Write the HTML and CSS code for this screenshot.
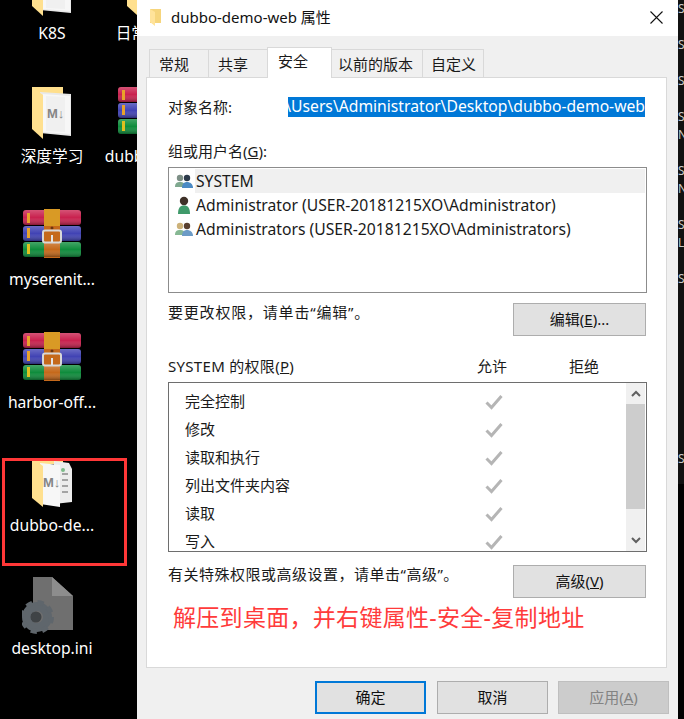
FILE: index.html
```html
<!DOCTYPE html>
<html>
<head>
    <title>dubbo-demo-web 属性</title>
    <link rel="stylesheet" href="styles.css">
</head>
<body>
    <svg class="defs" width="0" height="0">
        <defs>
            <linearGradient id="shade" x1="0" y1="0" x2="0" y2="1">
                <stop offset="0" stop-color="#fff" stop-opacity=".22"/>
                <stop offset=".5" stop-color="#fff" stop-opacity="0"/>
                <stop offset="1" stop-color="#000" stop-opacity=".35"/>
            </linearGradient>
            <symbol id="rar" viewBox="0 0 58 49">
                <rect x="0" y="1" width="58" height="15" rx="3" fill="#c9224f"/>
                <rect x="0" y="17" width="58" height="15" rx="3" fill="#4143b4"/>
                <rect x="0" y="33" width="58" height="15" rx="3" fill="#0f8c3c"/>
                <rect x="0" y="1" width="58" height="15" rx="3" fill="url(#shade)"/>
                <rect x="0" y="17" width="58" height="15" rx="3" fill="url(#shade)"/>
                <rect x="0" y="33" width="58" height="15" rx="3" fill="url(#shade)"/>
                <rect x="4" y="4" width="3" height="10" fill="#e8a32a"/>
                <rect x="4" y="19" width="3" height="10" fill="#e8a32a"/>
                <rect x="4" y="35" width="3" height="10" fill="#e0c020"/>
                <rect x="21" y="0" width="16" height="17" fill="#d99a25"/>
                <rect x="21" y="17" width="16" height="32" fill="#c5691b"/>
                <rect x="21" y="33" width="16" height="15" fill="url(#shade)"/>
                <circle cx="29" cy="19" r="1.500" fill="#6b3510"/>
                <rect x="20" y="21.500" width="18" height="12" rx="2" fill="none" stroke="#d8d8d8" stroke-width="2"/>
                <rect x="28" y="26" width="2" height="7" fill="#e4e4e4"/>
            </symbol>
            <symbol id="md-folder" viewBox="0 0 40 52">
                <path d="M0 0H31V8H0Z" fill="#ffdf8c"/>
                <path d="M8 5L39 7V49L8 46Z" fill="#e9e9e9"/>
                <path d="M11 7L38 9V47L11 45Z" fill="#f7f7f7"/>
                <path d="M14 9L33 10V45L14 44Z" fill="#f0f0f0"/>
                <text x="15" y="31" class="md-mark">M↓</text>
                <path d="M0 0L11 8V52L0 42Z" fill="#ffe08f"/>
            </symbol>
            <symbol id="group-grey" viewBox="0 0 18 14">
                <circle cx="5" cy="4" r="3.200" fill="#7d8f86"/>
                <path d="M0 13C0 9 2 8 5 8S10 9 10 13Z" fill="#7fa88f"/>
                <circle cx="12" cy="4" r="3.200" fill="#2c3a4a"/>
                <path d="M7 14C7 10 9 8 12 8S18 10 18 14Z" fill="#4b8ac4"/>
            </symbol>
            <symbol id="group-tan" viewBox="0 0 18 14">
                <circle cx="5" cy="4" r="3.200" fill="#cdb27a"/>
                <path d="M0 13C0 9 2 8 5 8S10 9 10 13Z" fill="#86b893"/>
                <circle cx="12" cy="4" r="3.200" fill="#5a4030"/>
                <path d="M7 14C7 10 9 8 12 8S18 10 18 14Z" fill="#6c9bc6"/>
            </symbol>
            <symbol id="check" viewBox="0 0 18 16">
                <path d="M1.500 8.500L6.500 13.500L16.500 2" fill="none" stroke="#b5b5b5" stroke-width="3"/>
            </symbol>
        </defs>
    </svg>

    <div class="desktop">
        <div class="icon-col">
            <div class="desk-item">
                <svg class="ico-folder"><use href="#md-folder"/></svg>
                <span class="desk-label">K8S</span>
            </div>
            <div class="desk-item">
                <svg class="ico-folder"><use href="#md-folder"/></svg>
                <span class="desk-label">深度学习</span>
            </div>
            <div class="desk-item">
                <svg class="ico-rar"><use href="#rar"/></svg>
                <span class="desk-label">myserenit...</span>
            </div>
            <div class="desk-item">
                <svg class="ico-rar"><use href="#rar"/></svg>
                <span class="desk-label">harbor-off...</span>
            </div>
            <div class="desk-item">
                <svg class="ico-folder ico-short" viewBox="0 0 40 50">
                    <path d="M0 0H31V6H0Z" fill="#ffdf8c"/>
                    <path d="M22 3L37 5L40 11V44L22 46Z" fill="#ececec"/>
                    <path d="M30 16H36M30 22H36M30 28H36M30 34H36" stroke="#8a8a8a" stroke-width="1.500"/>
                    <circle cx="31" cy="12" r="2" fill="#7dbb8a"/>
                    <path d="M8 5L28 7V49L8 46Z" fill="#f7f7f7"/>
                    <text x="11" y="29" class="md-mark">M↓</text>
                    <path d="M0 0L11 8V49L0 40Z" fill="#ffe08f"/>
                </svg>
                <span class="desk-label">dubbo-de...</span>
            </div>
            <div class="desk-item">
                <svg class="ico-file" viewBox="0 0 61 57">
                    <path d="M11 0H30L51 19V53H11Z" fill="#6f6f6f"/>
                    <path d="M30 0L51 19H30Z" fill="#8d8d8d"/>
                    <circle cx="15" cy="40" r="10.500" fill="none" stroke="#5f666c" stroke-width="9"/>
                    <circle cx="15" cy="40" r="14.500" fill="none" stroke="#5f666c" stroke-width="5" stroke-dasharray="6 5.400"/>
                    <circle cx="14" cy="40" r="5.500" fill="#3f4346"/>
                </svg>
                <span class="desk-label">desktop.ini</span>
            </div>
        </div>
        <div class="icon-col">
            <div class="desk-item">
                <svg class="ico-folder"><use href="#md-folder"/></svg>
                <span class="desk-label">日常工作</span>
            </div>
            <div class="desk-item">
                <svg class="ico-rar"><use href="#rar"/></svg>
                <span class="desk-label">dubbo-de...</span>
            </div>
        </div>
    </div>

    <div class="red-box"></div>

    <div class="window">
        <div class="titlebar">
            <svg class="title-icon" viewBox="0 0 12 18">
                <path d="M0 1H11V15H0Z" fill="#f6d57c"/>
                <path d="M0 1L5 4V18L0 14Z" fill="#ffe39a"/>
            </svg>
            <span class="title-text">dubbo-demo-web 属性</span>
            <svg class="close-icon" viewBox="0 0 13 13">
                <path d="M.5 .5L12.500 12.500M12.500 .5L.5 12.500" stroke="#111" stroke-width="1.100"/>
            </svg>
        </div>

        <div class="tabs">
            <div class="tab">常规</div>
            <div class="tab">共享</div>
            <div class="tab tab-active">安全</div>
            <div class="tab tab-b">以前的版本</div>
            <div class="tab tab-c">自定义</div>
        </div>

        <div class="panel">
            <div class="name-row">
                <span class="name-label">对象名称:</span>
                <div class="name-value"><span>\Users\Administrator\Desktop\dubbo-demo-web</span></div>
            </div>

            <div class="group-label">组或用户名(<u>G</u>):</div>
            <div class="user-list">
                <div class="user-row">
                    <svg class="user-icon"><use href="#group-grey"/></svg>
                    <span class="user-name user-selected">SYSTEM</span>
                </div>
                <div class="user-row">
                    <svg class="user-icon" viewBox="0 0 18 18">
                        <circle cx="9" cy="5" r="4.200" fill="#3f3128"/>
                        <path d="M3 18C3 12 5 9.500 9 9.500S15 12 15 18Z" fill="#3f9a6a"/>
                    </svg>
                    <span class="user-name">Administrator (USER-20181215XO\Administrator)</span>
                </div>
                <div class="user-row">
                    <svg class="user-icon"><use href="#group-tan"/></svg>
                    <span class="user-name">Administrators (USER-20181215XO\Administrators)</span>
                </div>
            </div>

            <div class="action-row">
                <span class="edit-note">要更改权限，请单击“编辑”。</span>
                <button class="btn btn-side">编辑(<u>E</u>)...</button>
            </div>

            <div class="perm-head">
                <span class="perm-title">SYSTEM 的权限(<u>P</u>)</span>
                <span>允许</span>
                <span>拒绝</span>
            </div>
            <div class="perm-list">
                <div class="perm-rows">
                    <div class="perm-row"><span>完全控制</span><svg class="check"><use href="#check"/></svg></div>
                    <div class="perm-row"><span>修改</span><svg class="check"><use href="#check"/></svg></div>
                    <div class="perm-row"><span>读取和执行</span><svg class="check"><use href="#check"/></svg></div>
                    <div class="perm-row"><span>列出文件夹内容</span><svg class="check"><use href="#check"/></svg></div>
                    <div class="perm-row"><span>读取</span><svg class="check"><use href="#check"/></svg></div>
                    <div class="perm-row"><span>写入</span><svg class="check"><use href="#check"/></svg></div>
                </div>
                <div class="scrollbar">
                    <div class="scroll-btn">
                        <svg class="scroll-arrow" viewBox="0 0 10 7"><path d="M1 6L5 2L9 6" fill="none" stroke="#606060" stroke-width="2"/></svg>
                    </div>
                    <div class="scroll-thumb"></div>
                    <div class="scroll-rest"></div>
                    <div class="scroll-btn">
                        <svg class="scroll-arrow" viewBox="0 0 10 7"><path d="M1 1L5 5L9 1" fill="none" stroke="#606060" stroke-width="2"/></svg>
                    </div>
                </div>
            </div>

            <div class="action-row advanced-row">
                <span class="advanced-note">有关特殊权限或高级设置，请单击“高级”。</span>
                <button class="btn btn-side">高级(<u>V</u>)</button>
            </div>

            <div class="red-note">解压到桌面，并右键属性-安全-复制地址</div>
        </div>

        <div class="footer">
            <button class="btn btn-foot btn-default">确定</button>
            <button class="btn btn-foot">取消</button>
            <button class="btn btn-foot btn-disabled">应用(<u>A</u>)</button>
        </div>
    </div>

    <div class="peek">S

S

S

S
N

S
N

S
L

S









S</div>
</body>
</html>
```

FILE: styles.css
```css
html, body {
  margin: 0;
  height: 719px;
  overflow: hidden;
  background: #000;
}

body {
  position: relative;
  font-family: "Noto Sans", "Noto Sans CJK SC", sans-serif;
  font-size: 15px;
  color: #1a1a1a;
}

.defs {
  position: absolute;
}

.md-mark {
  font-family: "Liberation Sans", sans-serif;
  font-size: 13px;
  font-weight: bold;
  fill: #858585;
}

/* desktop */
.desktop {
  display: flex;
  width: 134px;
  overflow: hidden;
  margin-top: -79px;
  margin-left: 3px;
}

.icon-col {
  width: 98px;
  flex: none;
}

.icon-col + .icon-col {
  margin-left: -3px;
}

.desk-item {
  height: 123px;
  display: flex;
  flex-direction: column;
  align-items: center;
  justify-content: flex-end;
}

.desk-label {
  height: 22px;
  line-height: 22px;
  font-size: 15.7px;
  color: #fff;
  white-space: nowrap;
}

.ico-folder {
  width: 40px;
  height: 52px;
  margin-bottom: 6px;
}

.ico-short {
  height: 50px;
}

.ico-rar {
  width: 58px;
  height: 49px;
  margin-bottom: 10px;
}

.ico-file {
  width: 61px;
  height: 57px;
  margin-bottom: 3px;
}

.red-box {
  position: absolute;
  left: 2px;
  top: 458px;
  width: 125px;
  height: 108px;
  box-sizing: border-box;
  border: 3px solid #ff3737;
}

.peek {
  position: absolute;
  left: 678px;
  top: 0;
  width: 6px;
  height: 484px;
  overflow: hidden;
  background: #111;
  color: #c9c9c9;
  font-size: 12px;
  line-height: 18px;
  white-space: pre;
}

/* window */
.window {
  position: absolute;
  left: 137px;
  top: 0;
  width: 541px;
  height: 719px;
  background: #f0f0f0;
  display: flex;
  flex-direction: column;
}

.titlebar {
  height: 34px;
  padding: 0 15px 2px 13px;
  flex: none;
  background: #fff;
  display: flex;
  align-items: center;
}

.title-icon {
  width: 12px;
  height: 18px;
}

.title-text {
  margin: 0 0 2px 9px;
  color: #111;
  flex: 1;
}

.close-icon {
  width: 13px;
  height: 13px;
}

.tabs {
  display: flex;
  align-items: flex-end;
  height: 30px;
  margin-top: 11px;
  margin-left: 12px;
  flex: none;
}

.tab {
  width: 59px;
  height: 28px;
  box-sizing: border-box;
  padding-left: 9px;
  border: 1px solid #d9d9d9;
  border-right: none;
  border-bottom: none;
  line-height: 28px;
  position: relative;
}

.tab-active {
  width: 65px;
  height: 31px;
  padding-left: 10px;
  margin-bottom: -1px;
  background: #fff;
  border-right: 1px solid #d9d9d9;
  line-height: 26px;
  z-index: 1;
}

.tab-b {
  width: 90px;
  padding-left: 6px;
  border-left: none;
}

.tab-c {
  width: 62px;
  padding-left: 8px;
  border-right: 1px solid #d9d9d9;
}

.panel {
  flex: 1;
  margin: 0 11px 0 9px;
  padding: 19px 19px 0 21px;
  background: #fff;
  border: 1px solid #d9d9d9;
}

.name-row {
  display: flex;
  align-items: center;
  height: 20px;
}

.name-label {
  width: 120px;
  flex: none;
  margin-bottom: 2px;
}

.name-value {
  width: 357px;
  height: 20px;
  line-height: 18px;
  font-size: 15.7px;
  background: #0078d7;
  color: #fff;
  display: flex;
  justify-content: flex-end;
  overflow: hidden;
  white-space: nowrap;
}

.group-label {
  height: 20px;
  line-height: 18px;
  margin-top: 25px;
}

.user-list {
  box-sizing: border-box;
  height: 126px;
  margin-top: 5px;
  padding: 1px;
  border: 1px solid #8c8c8c;
}

.user-row {
  display: flex;
  align-items: center;
  height: 24px;
  padding-left: 5px;
}

.user-icon {
  width: 18px;
  height: 18px;
  flex: none;
}

.user-name {
  flex: 1;
  height: 24px;
  line-height: 24px;
  font-size: 15.7px;
  margin-left: 2px;
  padding-left: 1px;
  white-space: nowrap;
}

.user-selected {
  background: #f0f0f0;
}

.action-row {
  display: flex;
  justify-content: space-between;
  margin-top: 10px;
  padding-right: 1px;
  line-height: 18px;
}

.edit-note {
  letter-spacing: .8px;
}

.advanced-note {
  letter-spacing: .5px;
}

.btn {
  box-sizing: border-box;
  height: 33px;
  padding: 0 0 2px;
  background: #e1e1e1;
  border: 1px solid #adadad;
  color: #111;
  font: inherit;
}

.btn-side {
  width: 133px;
}

.perm-head {
  display: grid;
  grid-template-columns: 309px 92px 1fr;
  height: 20px;
  line-height: 18px;
  margin-top: 21px;
}

.perm-title {
  letter-spacing: .3px;
}

.perm-list {
  box-sizing: border-box;
  display: flex;
  height: 170px;
  margin-top: 5px;
  border: 1px solid #6e6e6e;
  overflow: hidden;
}

.perm-rows {
  flex: 1;
  padding: 3px 0 0 16px;
}

.perm-row {
  display: grid;
  grid-template-columns: 300px 18px;
  align-items: center;
  height: 28px;
}

.check {
  width: 18px;
  height: 16px;
  margin-top: 4px;
}

.scrollbar {
  width: 19px;
  margin-right: 1px;
  background: #f0f0f0;
  display: flex;
  flex-direction: column;
}

.scroll-btn {
  height: 21px;
  flex: none;
  display: flex;
  align-items: center;
  justify-content: center;
}

.scroll-arrow {
  width: 10px;
  height: 7px;
}

.scroll-thumb {
  height: 105px;
  flex: none;
  background: #cdcdcd;
}

.scroll-rest {
  flex: 1;
}

.advanced-row {
  margin-top: 13px;
}

.red-note {
  margin-top: 3px;
  margin-left: 5px;
  height: 32px;
  line-height: 32px;
  font-size: 23px;
  letter-spacing: .3px;
  color: #ff3b3b;
  white-space: nowrap;
}

.footer {
  flex: none;
  display: flex;
  justify-content: flex-end;
  gap: 10px;
  height: 33px;
  margin: 13px 9px 5px 0;
}

.btn-foot {
  width: 111px;
}

.btn-default {
  border: 2px solid #0078d7;
  margin-right: 1px;
}

.btn-disabled {
  background: #cccccc;
  border-color: #bfbfbf;
  color: #838383;
}
```
